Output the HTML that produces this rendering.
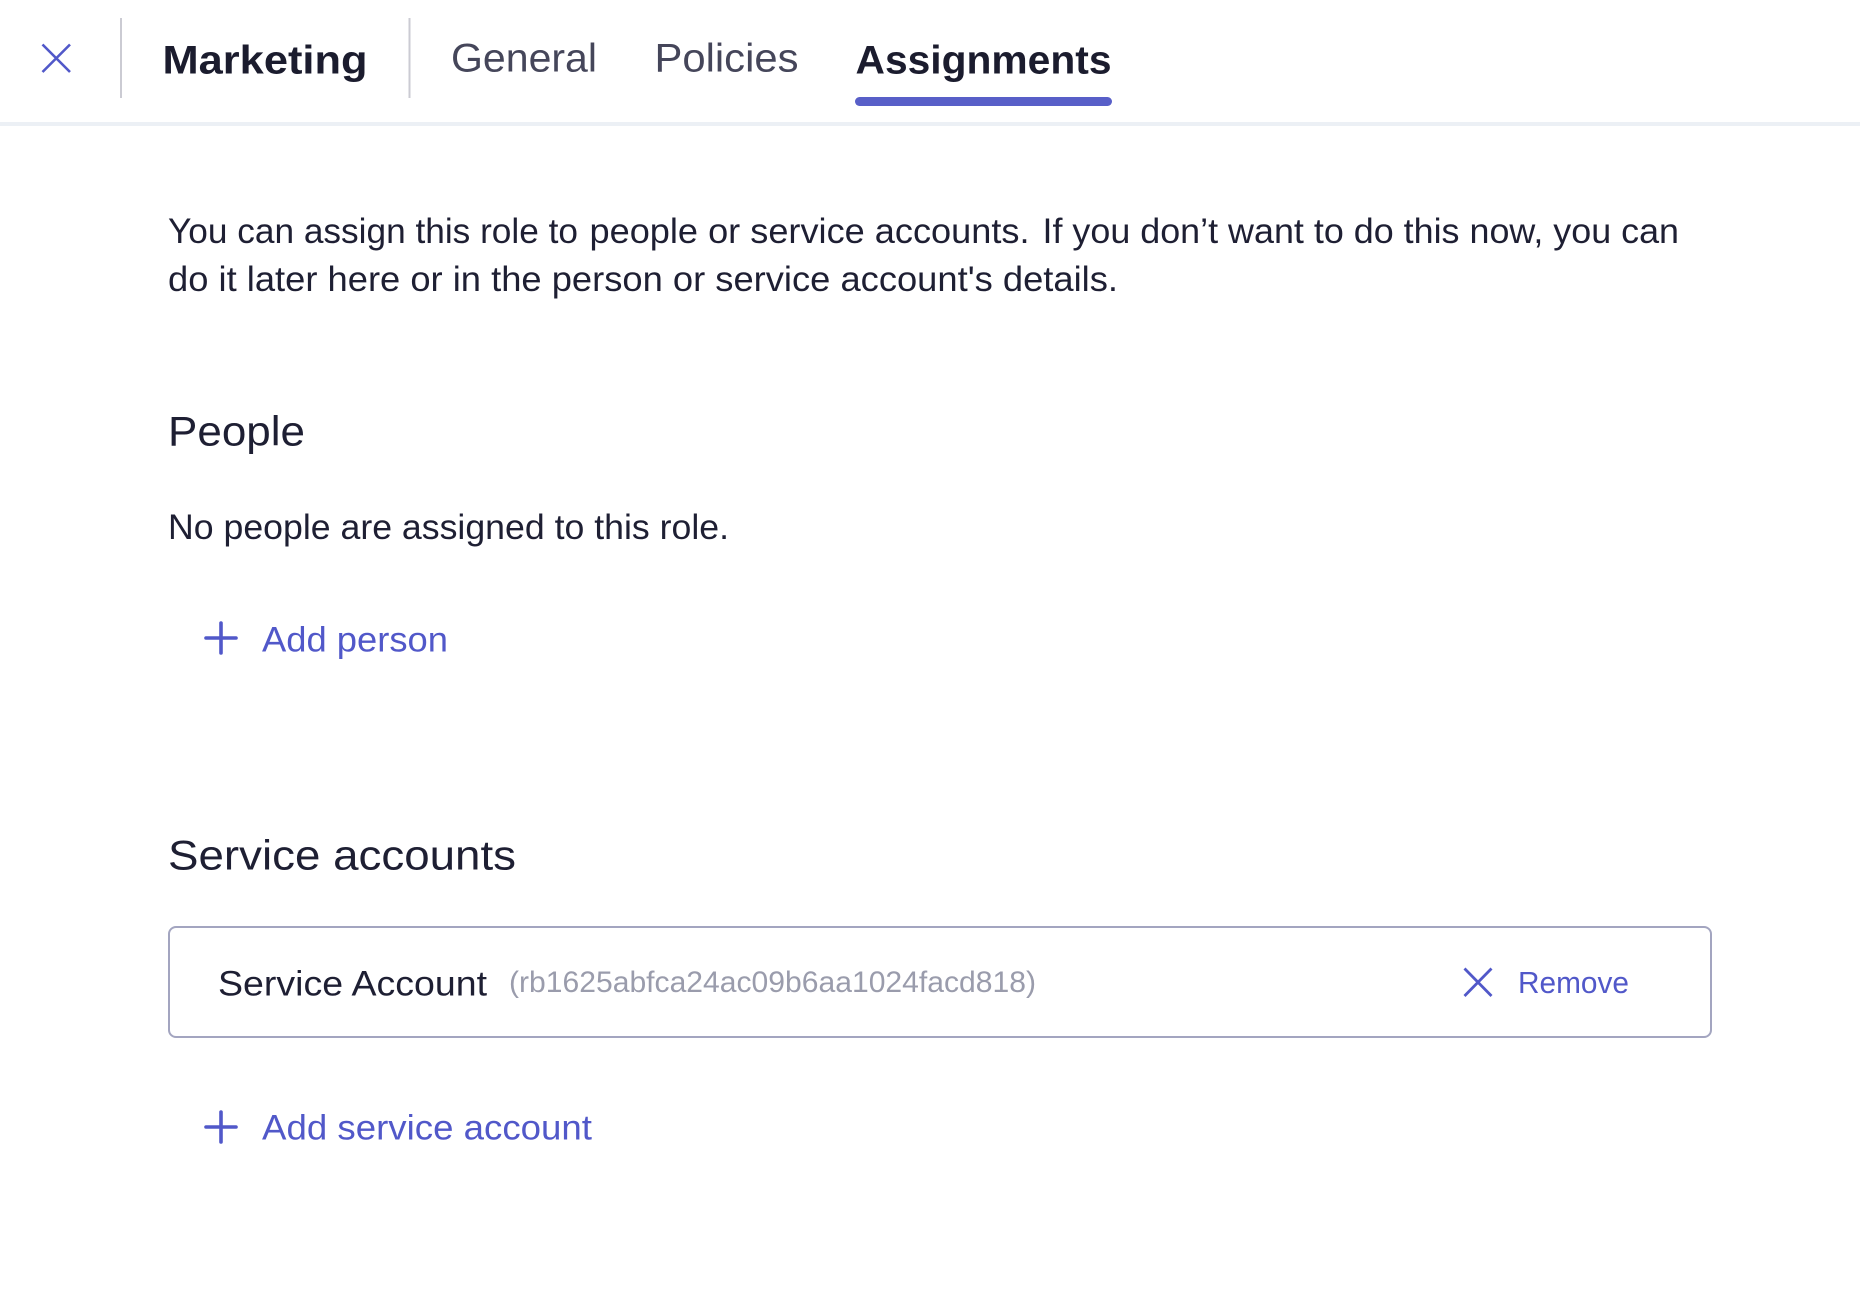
<!DOCTYPE html>
<html><head><meta charset="utf-8"><title>Marketing - Assignments</title>
<style>
html,body{margin:0;padding:0;background:#fff;width:1860px;height:1314px;overflow:hidden}
svg{display:block}
text{font-family:"Liberation Sans",sans-serif;fill:#1e1f33}
.b{font-size:40px;font-weight:700;fill:#1b1c2e}
.t{font-size:40px;fill:#45465a}
.p{font-size:35px}
.h{font-size:42px}
.l{font-size:35.500px;fill:#5158c9}
</style></head><body>
<svg width="1860" height="1314" viewBox="0 0 1860 1314" xmlns="http://www.w3.org/2000/svg">
<rect x="0" y="122" width="1860" height="4" fill="#ecf0f5"/>
<path d="M42.500 44.500 L70 72 M70 44.500 L42.500 72" stroke="#5158c9" stroke-width="2.600" fill="none"/>
<rect x="120" y="18" width="2" height="80" fill="#cbcbd3"/>
<rect x="408.500" y="18" width="2" height="80" fill="#cbcbd3"/>
<text class="b" x="162.500" y="73.500" textLength="205" lengthAdjust="spacingAndGlyphs">Marketing</text>
<text class="t" x="451" y="71.500" textLength="146" lengthAdjust="spacingAndGlyphs">General</text>
<text class="t" x="654.500" y="71.500" textLength="144" lengthAdjust="spacingAndGlyphs">Policies</text>
<text class="b" x="855.500" y="73.500" textLength="256" lengthAdjust="spacingAndGlyphs">Assignments</text>
<rect x="855" y="97" width="257" height="9" rx="4.500" fill="#585fc8"/>
<text class="p" x="168" y="243" textLength="410" lengthAdjust="spacingAndGlyphs">You can assign this role to</text>
<text class="p" x="589.500" y="243" textLength="440" lengthAdjust="spacingAndGlyphs">people or service accounts.</text>
<text class="p" x="1042.500" y="243" textLength="636.500" lengthAdjust="spacingAndGlyphs">If you don’t want to do this now, you can</text>
<text class="p" x="168" y="291" textLength="950" lengthAdjust="spacingAndGlyphs">do it later here or in the person or service account's details.</text>
<text class="h" x="168" y="445.500" textLength="137" lengthAdjust="spacingAndGlyphs">People</text>
<text class="p" x="168" y="539" textLength="561" lengthAdjust="spacingAndGlyphs">No people are assigned to this role.</text>
<path d="M221 623 V653 M206 638 H236" stroke="#5158c9" stroke-width="3.600" stroke-linecap="round" fill="none"/>
<text class="l" x="262" y="651.500" textLength="186" lengthAdjust="spacingAndGlyphs">Add person</text>
<text class="h" x="168" y="869.500" textLength="348" lengthAdjust="spacingAndGlyphs">Service accounts</text>
<rect x="169" y="927" width="1542" height="110" rx="7" fill="#fff" stroke="#a3a5c0" stroke-width="2"/>
<text class="p" x="218" y="995.500" textLength="269" lengthAdjust="spacingAndGlyphs">Service Account</text>
<text x="509" y="992" font-size="30" style="fill:#9a9cac" textLength="527" lengthAdjust="spacingAndGlyphs">(rb1625abfca24ac09b6aa1024facd818)</text>
<path d="M1464.500 968.500 L1491.500 996 M1491.500 968.500 L1464.500 996" stroke="#5158c9" stroke-width="2.800" fill="none"/>
<text x="1518" y="993" font-size="31" style="fill:#5158c9" textLength="111" lengthAdjust="spacingAndGlyphs">Remove</text>
<path d="M221 1112 V1142 M206 1127 H236" stroke="#5158c9" stroke-width="3.600" stroke-linecap="round" fill="none"/>
<text class="l" x="262" y="1139.500" textLength="330" lengthAdjust="spacingAndGlyphs">Add service account</text>
</svg>
</body></html>
